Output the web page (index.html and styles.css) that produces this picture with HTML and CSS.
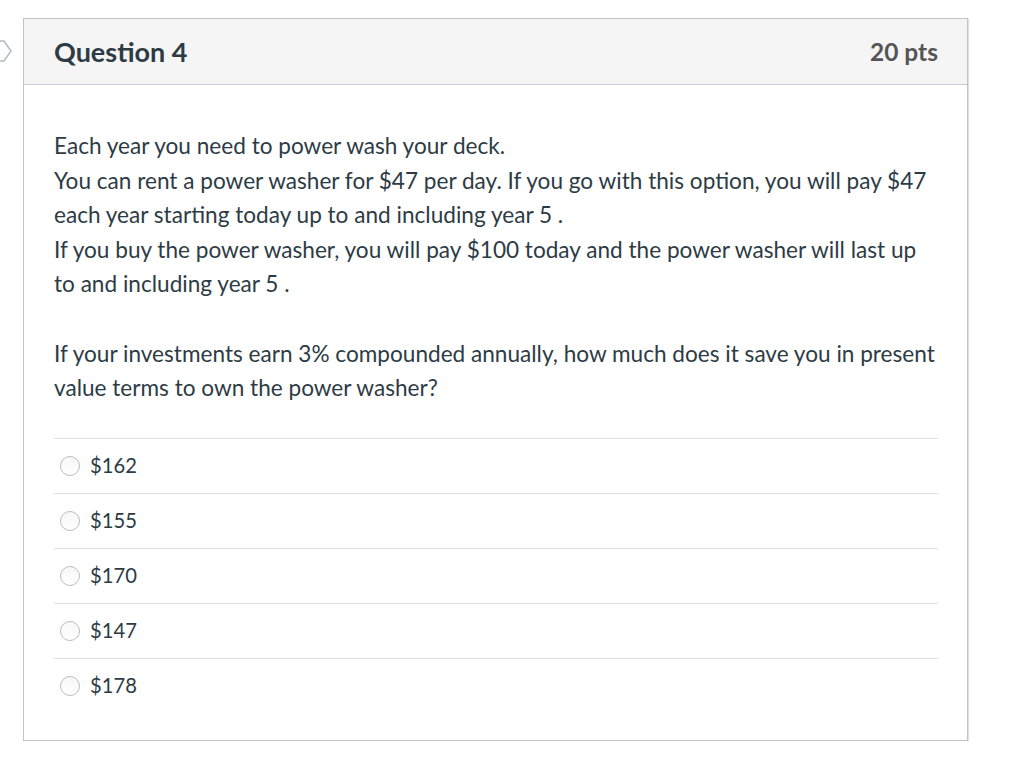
FILE: index.html
```html
<!DOCTYPE html>
<html>
<head lang="en">
    <meta charset="UTF-8">
    <title>Question 4</title>
    <link rel="stylesheet" href="styles.css">
</head>
<body>
<div class="page">
    <div class="flag">
        <svg width="14" height="24" viewBox="0 0 14 24">
            <path d="M-2 2 L4 2 L11 12 L4 22 L-2 22" fill="none" stroke="#aebcc8" stroke-width="1.5"/>
        </svg>
    </div>
    <div class="question">
        <div class="header">
            <span class="title">Question 4</span>
            <span class="points">20 pts</span>
        </div>
        <div class="body">
            <div class="text">
                <p>Each year you need to power wash your deck.<br>
                You can rent a power washer for $47 per day. If you go with this option, you will pay $47 each year starting today up to and including year 5 .<br>
                If you buy the power washer, you will pay $100 today and the power washer will last up to and including year 5 .</p>
                <p class="ask">If your investments earn 3% compounded annually, how much does it save you in present value terms to own the power washer?</p>
            </div>
            <ul class="answers">
                <li><span class="radio"></span>$162</li>
                <li><span class="radio"></span>$155</li>
                <li><span class="radio"></span>$170</li>
                <li><span class="radio"></span>$147</li>
                <li><span class="radio"></span>$178</li>
            </ul>
        </div>
    </div>
</div>
</body>
</html>
```

FILE: styles.css
```css
* {
    padding: 0;
    margin: 0;
    list-style: none;
    box-sizing: border-box;
}

body {
    font-family: Lato, "Liberation Sans", sans-serif;
    color: #2d3b45;
    background: #fff;
}

.page {
    display: flex;
    padding-top: 18px;
}

.flag {
    width: 23px;
    padding-top: 21px;
}

.flag svg {
    display: block;
}

.question {
    width: 945px;
    border: 1px solid #c3c3c3;
    box-shadow: 1px 1px 1px rgba(0, 0, 0, 0.12);
}

.header {
    display: flex;
    justify-content: space-between;
    align-items: center;
    height: 66px;
    padding: 0 29px 0 30px;
    background-color: #f5f5f5;
    border-bottom: 1px solid #c7cdd1;
}

.title {
    font-size: 27px;
    font-weight: bold;
    color: #2d3b45;
}

.points {
    font-size: 24.5px;
    font-weight: bold;
    color: #555;
}

.body {
    padding: 44px 29px 27px 30px;
}

.text {
    font-size: 22.6px;
    line-height: 34.6px;
    margin-right: -3px;
}

.ask {
    margin-top: 34.6px;
}

.answers {
    margin-top: 32px;
}

.answers li {
    display: flex;
    align-items: center;
    height: 55px;
    padding-bottom: 2px;
    border-top: 1px solid #dde1e3;
    font-size: 20.2px;
    padding-left: 6px;
}

.radio {
    width: 20px;
    height: 20px;
    border: 1px solid #bcbcbc;
    border-radius: 50%;
    background: linear-gradient(#f7f7f7, #fff);
    margin-right: 10px;
    margin-top: 3px;
}
```
